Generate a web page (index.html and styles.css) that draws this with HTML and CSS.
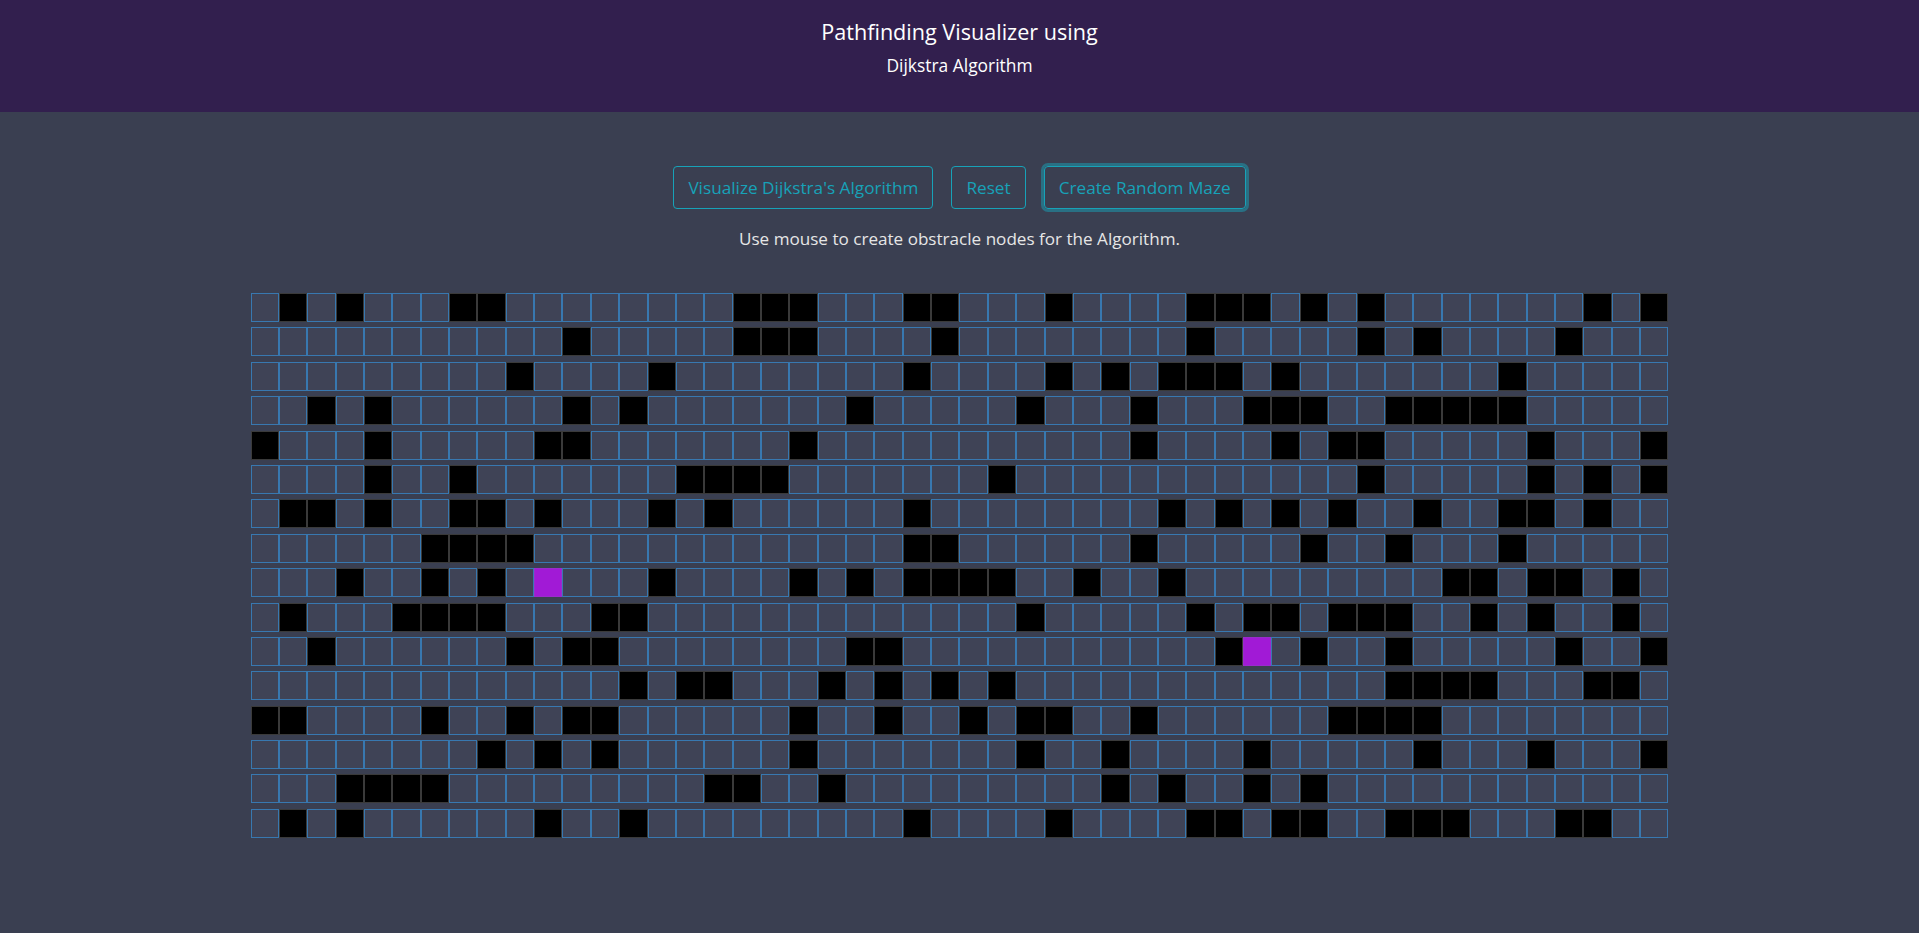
FILE: index.html
```html
<!DOCTYPE html>
<html lang="en">
<head>
<meta charset="utf-8">
<title>Pathfinding Visualizer</title>
<link rel="stylesheet" href="styles.css">
</head>
<body>
<header class="header">
  <h1 class="title">Pathfinding Visualizer using</h1>
  <p class="subtitle">Dijkstra Algorithm</p>
</header>
<main class="main">
  <div class="controls">
    <button class="btn">Visualize Dijkstra's Algorithm</button>
    <button class="btn">Reset</button>
    <button class="btn focus">Create Random Maze</button>
  </div>
  <p class="hint">Use mouse to create obstracle nodes for the Algorithm.</p>
  <div class="grid">
    <div class="row">
<i class="n"></i><i class="n w"></i><i class="n"></i><i class="n w"></i><i class="n"></i><i class="n"></i><i class="n"></i><i class="n w"></i><i class="n w"></i><i class="n"></i>
<i class="n"></i><i class="n"></i><i class="n"></i><i class="n"></i><i class="n"></i><i class="n"></i><i class="n"></i><i class="n w"></i><i class="n w"></i><i class="n w"></i>
<i class="n"></i><i class="n"></i><i class="n"></i><i class="n w"></i><i class="n w"></i><i class="n"></i><i class="n"></i><i class="n"></i><i class="n w"></i><i class="n"></i>
<i class="n"></i><i class="n"></i><i class="n"></i><i class="n w"></i><i class="n w"></i><i class="n w"></i><i class="n"></i><i class="n w"></i><i class="n"></i><i class="n w"></i>
<i class="n"></i><i class="n"></i><i class="n"></i><i class="n"></i><i class="n"></i><i class="n"></i><i class="n"></i><i class="n w"></i><i class="n"></i><i class="n w"></i>
    </div>
    <div class="row">
<i class="n"></i><i class="n"></i><i class="n"></i><i class="n"></i><i class="n"></i><i class="n"></i><i class="n"></i><i class="n"></i><i class="n"></i><i class="n"></i>
<i class="n"></i><i class="n w"></i><i class="n"></i><i class="n"></i><i class="n"></i><i class="n"></i><i class="n"></i><i class="n w"></i><i class="n w"></i><i class="n w"></i>
<i class="n"></i><i class="n"></i><i class="n"></i><i class="n"></i><i class="n w"></i><i class="n"></i><i class="n"></i><i class="n"></i><i class="n"></i><i class="n"></i>
<i class="n"></i><i class="n"></i><i class="n"></i><i class="n w"></i><i class="n"></i><i class="n"></i><i class="n"></i><i class="n"></i><i class="n"></i><i class="n w"></i>
<i class="n"></i><i class="n w"></i><i class="n"></i><i class="n"></i><i class="n"></i><i class="n"></i><i class="n w"></i><i class="n"></i><i class="n"></i><i class="n"></i>
    </div>
    <div class="row">
<i class="n"></i><i class="n"></i><i class="n"></i><i class="n"></i><i class="n"></i><i class="n"></i><i class="n"></i><i class="n"></i><i class="n"></i><i class="n w"></i>
<i class="n"></i><i class="n"></i><i class="n"></i><i class="n"></i><i class="n w"></i><i class="n"></i><i class="n"></i><i class="n"></i><i class="n"></i><i class="n"></i>
<i class="n"></i><i class="n"></i><i class="n"></i><i class="n w"></i><i class="n"></i><i class="n"></i><i class="n"></i><i class="n"></i><i class="n w"></i><i class="n"></i>
<i class="n w"></i><i class="n"></i><i class="n w"></i><i class="n w"></i><i class="n w"></i><i class="n"></i><i class="n w"></i><i class="n"></i><i class="n"></i><i class="n"></i>
<i class="n"></i><i class="n"></i><i class="n"></i><i class="n"></i><i class="n w"></i><i class="n"></i><i class="n"></i><i class="n"></i><i class="n"></i><i class="n"></i>
    </div>
    <div class="row">
<i class="n"></i><i class="n"></i><i class="n w"></i><i class="n"></i><i class="n w"></i><i class="n"></i><i class="n"></i><i class="n"></i><i class="n"></i><i class="n"></i>
<i class="n"></i><i class="n w"></i><i class="n"></i><i class="n w"></i><i class="n"></i><i class="n"></i><i class="n"></i><i class="n"></i><i class="n"></i><i class="n"></i>
<i class="n"></i><i class="n w"></i><i class="n"></i><i class="n"></i><i class="n"></i><i class="n"></i><i class="n"></i><i class="n w"></i><i class="n"></i><i class="n"></i>
<i class="n"></i><i class="n w"></i><i class="n"></i><i class="n"></i><i class="n"></i><i class="n w"></i><i class="n w"></i><i class="n w"></i><i class="n"></i><i class="n"></i>
<i class="n w"></i><i class="n w"></i><i class="n w"></i><i class="n w"></i><i class="n w"></i><i class="n"></i><i class="n"></i><i class="n"></i><i class="n"></i><i class="n"></i>
    </div>
    <div class="row">
<i class="n w"></i><i class="n"></i><i class="n"></i><i class="n"></i><i class="n w"></i><i class="n"></i><i class="n"></i><i class="n"></i><i class="n"></i><i class="n"></i>
<i class="n w"></i><i class="n w"></i><i class="n"></i><i class="n"></i><i class="n"></i><i class="n"></i><i class="n"></i><i class="n"></i><i class="n"></i><i class="n w"></i>
<i class="n"></i><i class="n"></i><i class="n"></i><i class="n"></i><i class="n"></i><i class="n"></i><i class="n"></i><i class="n"></i><i class="n"></i><i class="n"></i>
<i class="n"></i><i class="n w"></i><i class="n"></i><i class="n"></i><i class="n"></i><i class="n"></i><i class="n w"></i><i class="n"></i><i class="n w"></i><i class="n w"></i>
<i class="n"></i><i class="n"></i><i class="n"></i><i class="n"></i><i class="n"></i><i class="n w"></i><i class="n"></i><i class="n"></i><i class="n"></i><i class="n w"></i>
    </div>
    <div class="row">
<i class="n"></i><i class="n"></i><i class="n"></i><i class="n"></i><i class="n w"></i><i class="n"></i><i class="n"></i><i class="n w"></i><i class="n"></i><i class="n"></i>
<i class="n"></i><i class="n"></i><i class="n"></i><i class="n"></i><i class="n"></i><i class="n w"></i><i class="n w"></i><i class="n w"></i><i class="n w"></i><i class="n"></i>
<i class="n"></i><i class="n"></i><i class="n"></i><i class="n"></i><i class="n"></i><i class="n"></i><i class="n w"></i><i class="n"></i><i class="n"></i><i class="n"></i>
<i class="n"></i><i class="n"></i><i class="n"></i><i class="n"></i><i class="n"></i><i class="n"></i><i class="n"></i><i class="n"></i><i class="n"></i><i class="n w"></i>
<i class="n"></i><i class="n"></i><i class="n"></i><i class="n"></i><i class="n"></i><i class="n w"></i><i class="n"></i><i class="n w"></i><i class="n"></i><i class="n w"></i>
    </div>
    <div class="row">
<i class="n"></i><i class="n w"></i><i class="n w"></i><i class="n"></i><i class="n w"></i><i class="n"></i><i class="n"></i><i class="n w"></i><i class="n w"></i><i class="n"></i>
<i class="n w"></i><i class="n"></i><i class="n"></i><i class="n"></i><i class="n w"></i><i class="n"></i><i class="n w"></i><i class="n"></i><i class="n"></i><i class="n"></i>
<i class="n"></i><i class="n"></i><i class="n"></i><i class="n w"></i><i class="n"></i><i class="n"></i><i class="n"></i><i class="n"></i><i class="n"></i><i class="n"></i>
<i class="n"></i><i class="n"></i><i class="n w"></i><i class="n"></i><i class="n w"></i><i class="n"></i><i class="n w"></i><i class="n"></i><i class="n w"></i><i class="n"></i>
<i class="n"></i><i class="n w"></i><i class="n"></i><i class="n"></i><i class="n w"></i><i class="n w"></i><i class="n"></i><i class="n w"></i><i class="n"></i><i class="n"></i>
    </div>
    <div class="row">
<i class="n"></i><i class="n"></i><i class="n"></i><i class="n"></i><i class="n"></i><i class="n"></i><i class="n w"></i><i class="n w"></i><i class="n w"></i><i class="n w"></i>
<i class="n"></i><i class="n"></i><i class="n"></i><i class="n"></i><i class="n"></i><i class="n"></i><i class="n"></i><i class="n"></i><i class="n"></i><i class="n"></i>
<i class="n"></i><i class="n"></i><i class="n"></i><i class="n w"></i><i class="n w"></i><i class="n"></i><i class="n"></i><i class="n"></i><i class="n"></i><i class="n"></i>
<i class="n"></i><i class="n w"></i><i class="n"></i><i class="n"></i><i class="n"></i><i class="n"></i><i class="n"></i><i class="n w"></i><i class="n"></i><i class="n"></i>
<i class="n w"></i><i class="n"></i><i class="n"></i><i class="n"></i><i class="n w"></i><i class="n"></i><i class="n"></i><i class="n"></i><i class="n"></i><i class="n"></i>
    </div>
    <div class="row">
<i class="n"></i><i class="n"></i><i class="n"></i><i class="n w"></i><i class="n"></i><i class="n"></i><i class="n w"></i><i class="n"></i><i class="n w"></i><i class="n"></i>
<i class="n s"></i><i class="n"></i><i class="n"></i><i class="n"></i><i class="n w"></i><i class="n"></i><i class="n"></i><i class="n"></i><i class="n"></i><i class="n w"></i>
<i class="n"></i><i class="n w"></i><i class="n"></i><i class="n w"></i><i class="n w"></i><i class="n w"></i><i class="n w"></i><i class="n"></i><i class="n"></i><i class="n w"></i>
<i class="n"></i><i class="n"></i><i class="n w"></i><i class="n"></i><i class="n"></i><i class="n"></i><i class="n"></i><i class="n"></i><i class="n"></i><i class="n"></i>
<i class="n"></i><i class="n"></i><i class="n w"></i><i class="n w"></i><i class="n"></i><i class="n w"></i><i class="n w"></i><i class="n"></i><i class="n w"></i><i class="n"></i>
    </div>
    <div class="row">
<i class="n"></i><i class="n w"></i><i class="n"></i><i class="n"></i><i class="n"></i><i class="n w"></i><i class="n w"></i><i class="n w"></i><i class="n w"></i><i class="n"></i>
<i class="n"></i><i class="n"></i><i class="n w"></i><i class="n w"></i><i class="n"></i><i class="n"></i><i class="n"></i><i class="n"></i><i class="n"></i><i class="n"></i>
<i class="n"></i><i class="n"></i><i class="n"></i><i class="n"></i><i class="n"></i><i class="n"></i><i class="n"></i><i class="n w"></i><i class="n"></i><i class="n"></i>
<i class="n"></i><i class="n"></i><i class="n"></i><i class="n w"></i><i class="n"></i><i class="n w"></i><i class="n w"></i><i class="n"></i><i class="n w"></i><i class="n w"></i>
<i class="n w"></i><i class="n"></i><i class="n"></i><i class="n w"></i><i class="n"></i><i class="n w"></i><i class="n"></i><i class="n"></i><i class="n w"></i><i class="n"></i>
    </div>
    <div class="row">
<i class="n"></i><i class="n"></i><i class="n w"></i><i class="n"></i><i class="n"></i><i class="n"></i><i class="n"></i><i class="n"></i><i class="n"></i><i class="n w"></i>
<i class="n"></i><i class="n w"></i><i class="n w"></i><i class="n"></i><i class="n"></i><i class="n"></i><i class="n"></i><i class="n"></i><i class="n"></i><i class="n"></i>
<i class="n"></i><i class="n w"></i><i class="n w"></i><i class="n"></i><i class="n"></i><i class="n"></i><i class="n"></i><i class="n"></i><i class="n"></i><i class="n"></i>
<i class="n"></i><i class="n"></i><i class="n"></i><i class="n"></i><i class="n w"></i><i class="n s"></i><i class="n"></i><i class="n w"></i><i class="n"></i><i class="n"></i>
<i class="n w"></i><i class="n"></i><i class="n"></i><i class="n"></i><i class="n"></i><i class="n"></i><i class="n w"></i><i class="n"></i><i class="n"></i><i class="n w"></i>
    </div>
    <div class="row">
<i class="n"></i><i class="n"></i><i class="n"></i><i class="n"></i><i class="n"></i><i class="n"></i><i class="n"></i><i class="n"></i><i class="n"></i><i class="n"></i>
<i class="n"></i><i class="n"></i><i class="n"></i><i class="n w"></i><i class="n"></i><i class="n w"></i><i class="n w"></i><i class="n"></i><i class="n"></i><i class="n"></i>
<i class="n w"></i><i class="n"></i><i class="n w"></i><i class="n"></i><i class="n w"></i><i class="n"></i><i class="n w"></i><i class="n"></i><i class="n"></i><i class="n"></i>
<i class="n"></i><i class="n"></i><i class="n"></i><i class="n"></i><i class="n"></i><i class="n"></i><i class="n"></i><i class="n"></i><i class="n"></i><i class="n"></i>
<i class="n w"></i><i class="n w"></i><i class="n w"></i><i class="n w"></i><i class="n"></i><i class="n"></i><i class="n"></i><i class="n w"></i><i class="n w"></i><i class="n"></i>
    </div>
    <div class="row">
<i class="n w"></i><i class="n w"></i><i class="n"></i><i class="n"></i><i class="n"></i><i class="n"></i><i class="n w"></i><i class="n"></i><i class="n"></i><i class="n w"></i>
<i class="n"></i><i class="n w"></i><i class="n w"></i><i class="n"></i><i class="n"></i><i class="n"></i><i class="n"></i><i class="n"></i><i class="n"></i><i class="n w"></i>
<i class="n"></i><i class="n"></i><i class="n w"></i><i class="n"></i><i class="n"></i><i class="n w"></i><i class="n"></i><i class="n w"></i><i class="n w"></i><i class="n"></i>
<i class="n"></i><i class="n w"></i><i class="n"></i><i class="n"></i><i class="n"></i><i class="n"></i><i class="n"></i><i class="n"></i><i class="n w"></i><i class="n w"></i>
<i class="n w"></i><i class="n w"></i><i class="n"></i><i class="n"></i><i class="n"></i><i class="n"></i><i class="n"></i><i class="n"></i><i class="n"></i><i class="n"></i>
    </div>
    <div class="row">
<i class="n"></i><i class="n"></i><i class="n"></i><i class="n"></i><i class="n"></i><i class="n"></i><i class="n"></i><i class="n"></i><i class="n w"></i><i class="n"></i>
<i class="n w"></i><i class="n"></i><i class="n w"></i><i class="n"></i><i class="n"></i><i class="n"></i><i class="n"></i><i class="n"></i><i class="n"></i><i class="n w"></i>
<i class="n"></i><i class="n"></i><i class="n"></i><i class="n"></i><i class="n"></i><i class="n"></i><i class="n"></i><i class="n w"></i><i class="n"></i><i class="n"></i>
<i class="n w"></i><i class="n"></i><i class="n"></i><i class="n"></i><i class="n"></i><i class="n w"></i><i class="n"></i><i class="n"></i><i class="n"></i><i class="n"></i>
<i class="n"></i><i class="n w"></i><i class="n"></i><i class="n"></i><i class="n"></i><i class="n w"></i><i class="n"></i><i class="n"></i><i class="n"></i><i class="n w"></i>
    </div>
    <div class="row">
<i class="n"></i><i class="n"></i><i class="n"></i><i class="n w"></i><i class="n w"></i><i class="n w"></i><i class="n w"></i><i class="n"></i><i class="n"></i><i class="n"></i>
<i class="n"></i><i class="n"></i><i class="n"></i><i class="n"></i><i class="n"></i><i class="n"></i><i class="n w"></i><i class="n w"></i><i class="n"></i><i class="n"></i>
<i class="n w"></i><i class="n"></i><i class="n"></i><i class="n"></i><i class="n"></i><i class="n"></i><i class="n"></i><i class="n"></i><i class="n"></i><i class="n"></i>
<i class="n w"></i><i class="n"></i><i class="n w"></i><i class="n"></i><i class="n"></i><i class="n w"></i><i class="n"></i><i class="n w"></i><i class="n"></i><i class="n"></i>
<i class="n"></i><i class="n"></i><i class="n"></i><i class="n"></i><i class="n"></i><i class="n"></i><i class="n"></i><i class="n"></i><i class="n"></i><i class="n"></i>
    </div>
    <div class="row">
<i class="n"></i><i class="n w"></i><i class="n"></i><i class="n w"></i><i class="n"></i><i class="n"></i><i class="n"></i><i class="n"></i><i class="n"></i><i class="n"></i>
<i class="n w"></i><i class="n"></i><i class="n"></i><i class="n w"></i><i class="n"></i><i class="n"></i><i class="n"></i><i class="n"></i><i class="n"></i><i class="n"></i>
<i class="n"></i><i class="n"></i><i class="n"></i><i class="n w"></i><i class="n"></i><i class="n"></i><i class="n"></i><i class="n"></i><i class="n w"></i><i class="n"></i>
<i class="n"></i><i class="n"></i><i class="n"></i><i class="n w"></i><i class="n w"></i><i class="n"></i><i class="n w"></i><i class="n w"></i><i class="n"></i><i class="n"></i>
<i class="n w"></i><i class="n w"></i><i class="n w"></i><i class="n"></i><i class="n"></i><i class="n"></i><i class="n w"></i><i class="n w"></i><i class="n"></i><i class="n"></i>
    </div>
  </div>
</main>
</body>
</html>
```

FILE: styles.css
```css
* {
  box-sizing: border-box;
}

body {
  margin: 0;
  background: #3a3f51;
  font-family: "Open Sans", "Noto Sans", sans-serif;
  color: #ffffff;
}

.header {
  height: 112px;
  background: #321f4e;
  display: flex;
  flex-direction: column;
  align-items: center;
  padding-top: 19px;
}

.title {
  margin: 0;
  font-size: 21.6px;
  font-weight: 400;
  line-height: 26px;
}

.subtitle {
  margin: 9px 0 0;
  font-size: 17.4px;
  font-weight: 400;
  line-height: 22px;
}

.main {
  padding-top: 54px;
  display: flex;
  flex-direction: column;
  align-items: center;
}

.controls {
  display: flex;
  gap: 18px;
}

.btn {
  height: 43px;
  padding: 0 14px;
  border: 1px solid #17a2b8;
  border-radius: 4px;
  background: transparent;
  color: #17a2b8;
  font-family: inherit;
  font-size: 17.2px;
  cursor: pointer;
}

.btn.focus {
  box-shadow: 0 0 0 3px rgba(23, 162, 184, 0.5);
}

.hint {
  margin: 18px 0 0;
  font-size: 17.1px;
  line-height: 24px;
  color: #e6e6e6;
}

.grid {
  margin-top: 42px;
  width: 1418px;
  display: flex;
  flex-direction: column;
  gap: 5.4px;
}

.row {
  display: flex;
  height: 29px;
}

.n {
  flex: 1 1 0;
  border: 1px solid #3878b0;
  background: #3f4356;
}

.n.w {
  background: #000000;
  border-color: #3a3a3a;
}

.n.s {
  background: #a11ad6;
  border-color: #9a2ccc;
}
```
